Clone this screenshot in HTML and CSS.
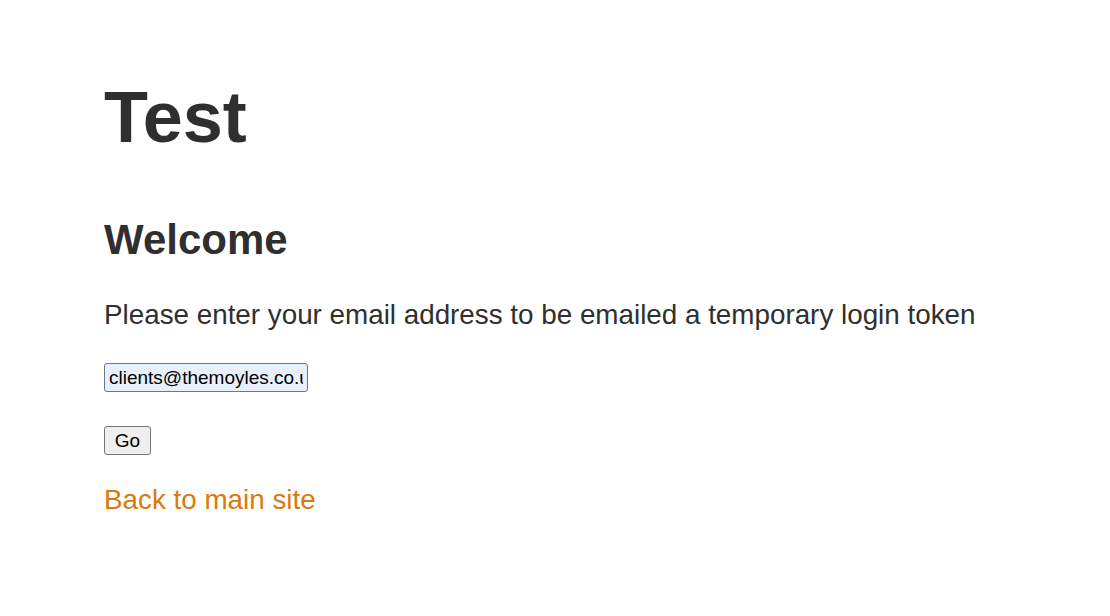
FILE: index.html
```html
<!DOCTYPE html>
<html lang="en">
<head>
<meta charset="utf-8">
<title>Test</title>
<link rel="stylesheet" href="styles.css">
</head>
<body>
<main class="page">
  <h1 class="title">Test</h1>
  <h2 class="subtitle">Welcome</h2>
  <p class="intro">Please enter your email address to be emailed a temporary login token</p>
  <form class="login-form">
    <input class="email-input" type="email" value="clients@themoyles.co.uk">
    <button class="go-button" type="button">Go</button>
  </form>
  <a class="back-link" href="#">Back to main site</a>
</main>
</body>
</html>
```

FILE: styles.css
```css
html, body {
  margin: 0;
  padding: 0;
  background: #ffffff;
}

body {
  font-family: "Liberation Sans", Arial, Helvetica, sans-serif;
  color: #2f2f2f;
}

.page {
  display: flex;
  flex-direction: column;
  align-items: flex-start;
  padding: 77px 104px 0 104px;
}

.title {
  margin: 0;
  font-size: 72px;
  line-height: 80px;
  font-weight: bold;
}

.subtitle {
  margin: 59px 0 0 0;
  font-size: 42px;
  line-height: 48px;
  font-weight: bold;
}

.intro {
  margin: 35px 0 0 0;
  font-size: 27.8px;
  line-height: 32px;
}

.login-form {
  display: flex;
  flex-direction: column;
  align-items: flex-start;
  gap: 34px;
  margin-top: 32px;
}

.email-input {
  box-sizing: border-box;
  width: 204px;
  height: 29px;
  padding: 1px 4px;
  border: 1px solid #767676;
  border-radius: 3px;
  background: #e8f0fe;
  color: #000;
  font-family: "Liberation Sans", Arial, sans-serif;
  font-size: 19px;
}

.go-button {
  box-sizing: border-box;
  width: 47px;
  height: 29px;
  padding: 0;
  border: 1px solid #767676;
  border-radius: 3px;
  background: #efefef;
  color: #000;
  font-family: "Liberation Sans", Arial, sans-serif;
  font-size: 19px;
}

.back-link {
  margin-top: 29px;
  font-size: 27.8px;
  line-height: 32px;
  color: #db7a0b;
  text-decoration: none;
}
```
